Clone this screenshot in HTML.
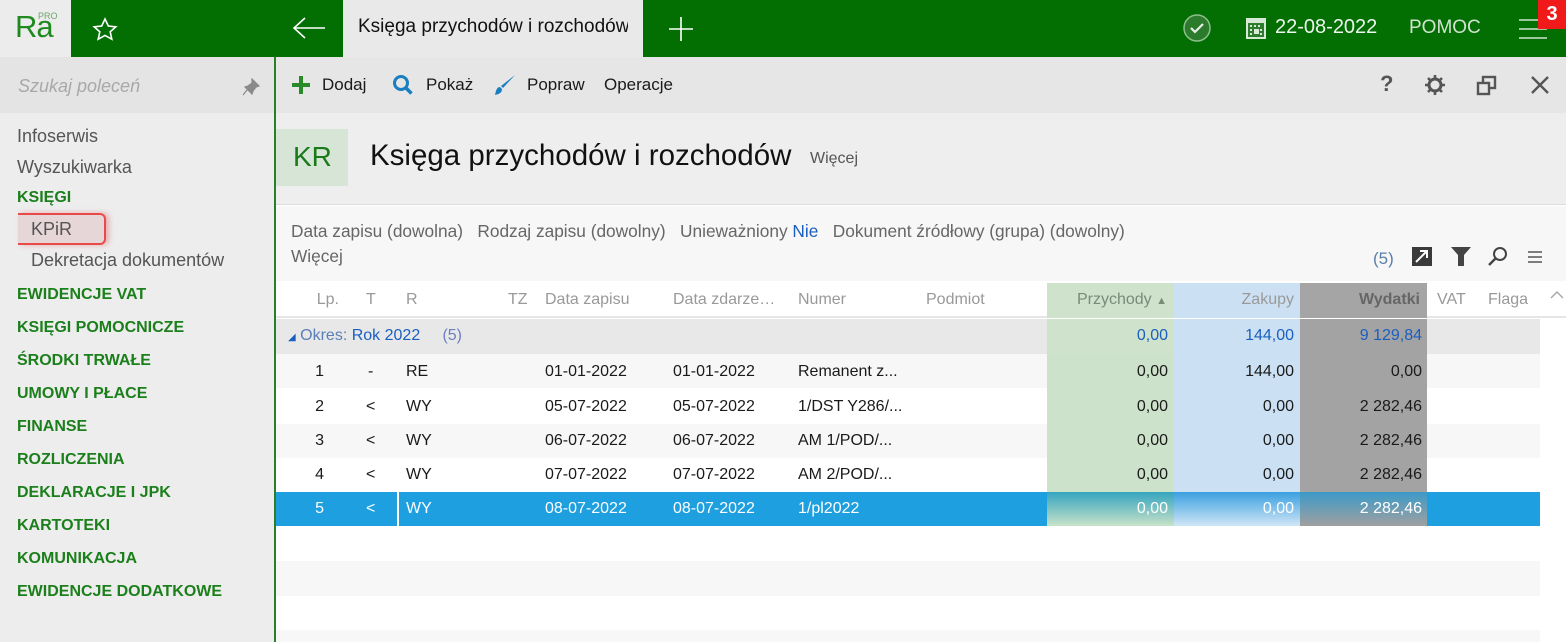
<!DOCTYPE html>
<html><head><meta charset="utf-8"><style>
*{margin:0;padding:0;box-sizing:border-box}
body{width:1566px;height:642px;overflow:hidden;font-family:"Liberation Sans",sans-serif;background:#fff;position:relative;color:#1a1a1a}
.a{position:absolute;white-space:nowrap}
.top{left:0;top:0;width:1566px;height:57px;background:#036f03}
.side{left:0;top:57px;width:276px;height:585px;background:#ededed;border-right:2px solid #2a7d2a}
.g{color:#1b7f1b;font-weight:bold;font-size:16px;left:17px}
.row{left:276px;width:1264px;height:34px;font-size:16px}
.c{position:absolute;top:0;height:100%;line-height:34px;white-space:nowrap}
.r{text-align:right}
</style></head><body>
<div class="a top"></div>
<div class="a" style="left:0;top:0;width:71px;height:57px;background:#ececec"></div>
<div class="a" style="left:15px;top:9px;font-size:31px;color:#1f8a1f;letter-spacing:-1px">Ra</div>
<div class="a" style="left:38px;top:11px;font-size:9px;color:#6aa86a">PRO</div>
<svg class="a" style="left:92px;top:17px" width="26" height="26" viewBox="0 0 26 26"><path d="M13 2l3.3 7 7.5.8-5.6 5 1.6 7.4L13 18.4 6.2 22.2l1.6-7.4-5.6-5 7.5-.8z" fill="none" stroke="#fff" stroke-width="1.6"/></svg>
<svg class="a" style="left:292px;top:16px" width="34" height="24"><path d="M2 12h31M13 2L2 12l11 10" fill="none" stroke="#fff" stroke-width="1.6"/></svg>
<div class="a" style="left:343px;top:0;width:300px;height:57px;background:#e9e9e9"></div>
<div class="a" style="left:358px;top:16px;font-size:19px;color:#111;width:270px;overflow:hidden">Księga przychodów i rozchodów</div>
<svg class="a" style="left:668px;top:16px" width="26" height="26"><path d="M13 1v24M1 13h24" stroke="#fff" stroke-width="1.6"/></svg>
<svg class="a" style="left:1182px;top:13px" width="30" height="30"><circle cx="15" cy="15" r="13" fill="#2c7a2c" stroke="#8cbf8c" stroke-width="1.5"/><path d="M9 15l4 4 8-8" fill="none" stroke="#e6f0e6" stroke-width="2.2"/></svg>
<svg class="a" style="left:1246px;top:18px" width="20" height="21"><rect x="0" y="0" width="20" height="21" fill="#d7ead7"/><rect x="2" y="5" width="16" height="14" fill="#2e7d2e"/><g fill="#d7ead7"><rect x="4" y="7" width="2" height="2"/><rect x="8" y="7" width="2" height="2"/><rect x="12" y="7" width="2" height="2"/><rect x="4" y="11" width="2" height="2"/><rect x="8" y="11" width="5" height="5"/><rect x="4" y="15" width="2" height="2"/><rect x="14" y="11" width="2" height="2"/><rect x="14" y="15" width="2" height="2"/></g></svg>
<div class="a" style="left:1275px;top:16px;font-size:20px;color:#eef5ee">22-08-2022</div>
<div class="a" style="left:1409px;top:17px;font-size:19px;color:#cfe3cf">POMOC</div>
<svg class="a" style="left:1519px;top:19px" width="28" height="20"><path d="M0 1h28M0 10h28M0 19h28" stroke="#cfe3cf" stroke-width="1.6"/></svg>
<div class="a" style="left:1538px;top:0;width:28px;height:29px;background:#f01a1a;color:#fff;font-weight:bold;font-size:20px;text-align:center;line-height:29px">3</div>

<div class="a side"></div>
<div class="a" style="left:0;top:57px;width:274px;height:56px;background:#e4e4e4"></div>
<div class="a" style="left:18px;top:76px;font-size:18px;font-style:italic;color:#a8a8a8">Szukaj poleceń</div>
<svg class="a" style="left:242px;top:78px" width="18" height="18"><path d="M10 1l7 7-3 1-3 4-1 3-7-7 3-1 4-3z M5 12l-4 5" fill="#8a8a8a" stroke="#8a8a8a" stroke-width="1.2"/></svg>
<div class="a" style="left:17px;top:126px;font-size:18px;color:#555">Infoserwis</div>
<div class="a" style="left:17px;top:157px;font-size:18px;color:#555">Wyszukiwarka</div>
<div class="a g" style="top:189px">KSIĘGI</div>
<div class="a" style="left:18px;top:213px;width:88px;height:32px;background:#e6d6d8;border:2px solid #e84a4a;border-left:none;border-radius:0 6px 6px 0;box-shadow:3px 0 6px rgba(220,80,80,.4)"></div>
<div class="a" style="left:31px;top:219px;font-size:18px;color:#555">KPiR</div>
<div class="a" style="left:31px;top:250px;font-size:18px;color:#555">Dekretacja dokumentów</div>
<div class="a g" style="top:286px">EWIDENCJE VAT</div>
<div class="a g" style="top:319px">KSIĘGI POMOCNICZE</div>
<div class="a g" style="top:352px">ŚRODKI TRWAŁE</div>
<div class="a g" style="top:385px">UMOWY I PŁACE</div>
<div class="a g" style="top:418px">FINANSE</div>
<div class="a g" style="top:451px">ROZLICZENIA</div>
<div class="a g" style="top:484px">DEKLARACJE I JPK</div>
<div class="a g" style="top:517px">KARTOTEKI</div>
<div class="a g" style="top:550px">KOMUNIKACJA</div>
<div class="a g" style="top:583px">EWIDENCJE DODATKOWE</div>

<div class="a" style="left:276px;top:57px;width:1290px;height:56px;background:#e6e6e6"></div>
<svg class="a" style="left:291px;top:75px" width="20" height="20"><path d="M10 1v18M1 10h18" stroke="#2a8a2a" stroke-width="4"/></svg>
<div class="a" style="left:322px;top:75px;font-size:17px">Dodaj</div>
<svg class="a" style="left:392px;top:74px" width="22" height="22"><circle cx="9" cy="9" r="6.5" fill="none" stroke="#1a7fc0" stroke-width="3"/><path d="M13.5 13.5l6 6" stroke="#1a7fc0" stroke-width="3.5"/></svg>
<div class="a" style="left:426px;top:75px;font-size:17px">Pokaż</div>
<svg class="a" style="left:493px;top:73px" width="24" height="24"><path d="M22 2L10 15l-2-2z" fill="#1a7fc0"/><path d="M7 14c-3 0-4 3-5 8 4-1 7-2 7-6z" fill="#1a7fc0"/></svg>
<div class="a" style="left:527px;top:75px;font-size:17px">Popraw</div>
<div class="a" style="left:604px;top:75px;font-size:17px">Operacje</div>
<div class="a" style="left:1380px;top:71px;font-size:22px;font-weight:bold;color:#555">?</div>
<svg class="a" style="left:1424px;top:74px" width="22" height="22"><circle cx="11" cy="11" r="6" fill="none" stroke="#555" stroke-width="3"/><path d="M11 1v5M11 16v5M1 11h5M16 11h5M4 4l3.5 3.5M14.5 14.5L18 18M18 4l-3.5 3.5M7.5 14.5L4 18" stroke="#555" stroke-width="2.6"/></svg>
<svg class="a" style="left:1476px;top:75px" width="22" height="22"><rect x="7" y="2" width="12" height="11" fill="none" stroke="#555" stroke-width="2.4"/><rect x="2" y="8" width="11" height="11" fill="#e6e6e6" stroke="#555" stroke-width="2.4"/></svg>
<svg class="a" style="left:1530px;top:75px" width="20" height="20"><path d="M2 2l16 16M18 2L2 18" stroke="#555" stroke-width="2.4"/></svg>

<div class="a" style="left:276px;top:113px;width:1290px;height:92px;background:#eeeeee;border-bottom:1px solid #dcdcdc"></div>
<div class="a" style="left:276px;top:129px;width:72px;height:57px;background:#d6e5d6"></div>
<div class="a" style="left:293px;top:141px;font-size:28px;color:#1a7a1a">KR</div>
<div class="a" style="left:370px;top:139px;font-size:29.5px;color:#111">Księga przychodów i rozchodów</div>
<div class="a" style="left:810px;top:150px;font-size:16px;color:#555">Więcej</div>

<div class="a" style="left:276px;top:206px;width:1290px;height:75px;background:#f7f7f7"></div>
<div class="a" style="left:291px;top:221px;font-size:17.3px;color:#666">Data zapisu (dowolna) &nbsp; Rodzaj zapisu (dowolny) &nbsp; Unieważniony <span style="color:#1a5fc0">Nie</span> &nbsp; Dokument źródłowy (grupa) (dowolny)</div>
<div class="a" style="left:291px;top:246px;font-size:17.3px;color:#666">Więcej</div>
<div class="a" style="left:1373px;top:249px;font-size:17px;color:#5a7fa8">(5)</div>
<svg class="a" style="left:1412px;top:247px" width="22" height="20"><rect width="20" height="19" fill="#3a3a3a"/><path d="M4 15L15 4M8 4h7v7" stroke="#fff" stroke-width="2" fill="none"/></svg>
<svg class="a" style="left:1451px;top:247px" width="20" height="20"><path d="M0 0h20l-7 8v11h-6V8z" fill="#444"/></svg>
<svg class="a" style="left:1487px;top:246px" width="22" height="22"><circle cx="13" cy="8" r="6" fill="none" stroke="#444" stroke-width="2"/><path d="M9 12l-7 7" stroke="#444" stroke-width="2.4"/></svg>
<svg class="a" style="left:1528px;top:251px" width="16" height="12"><path d="M0 1h14M0 6h14M0 11h14" stroke="#555" stroke-width="1.5"/></svg>

<!-- header -->
<div class="a" style="left:276px;top:281px;width:1290px;height:37px;background:#fff;border-bottom:2px solid #e6e6e6"></div>
<div class="a" style="left:1047px;top:283px;width:127px;height:35px;background:#cfe3cc"></div>
<div class="a" style="left:1174px;top:283px;width:126px;height:35px;background:#cbe1f3"></div>
<div class="a" style="left:1300px;top:283px;width:127px;height:35px;background:#a5a5a5"></div>
<div class="a" style="left:276px;top:283px;width:1264px;height:35px;font-size:16px;color:#999">
<span class="c r" style="left:0;width:63px">Lp.</span>
<span class="c" style="left:90px">T</span>
<span class="c" style="left:130px">R</span>
<span class="c" style="left:232px">TZ</span>
<span class="c" style="left:269px">Data zapisu</span>
<span class="c" style="left:397px">Data zdarze…</span>
<span class="c" style="left:522px">Numer</span>
<span class="c" style="left:650px">Podmiot</span>
<span class="c r" style="left:771px;width:120px;color:#7a8a7a">Przychody <span style="font-size:11px">▲</span></span>
<span class="c r" style="left:898px;width:120px">Zakupy</span>
<span class="c r" style="left:1024px;width:120px;color:#666;font-weight:bold">Wydatki</span>
<span class="c" style="left:1161px">VAT</span>
<span class="c" style="left:1212px">Flaga</span>
</div>
<svg class="a" style="left:1550px;top:290px" width="14" height="10"><path d="M1 8l6-6 6 6" fill="none" stroke="#aaa" stroke-width="1.5"/></svg>

<!-- group -->
<div class="a row" style="top:319px;height:35px;background:#e8e8e8"></div>
<div class="a" style="left:1047px;top:319px;width:127px;height:35px;background:#cfe3cc"></div>
<div class="a" style="left:1174px;top:319px;width:126px;height:35px;background:#cbe1f3"></div>
<div class="a" style="left:1300px;top:319px;width:127px;height:35px;background:#a3a3a3"></div>
<div class="a row" style="top:319px;height:35px">
<span class="c" style="left:12px;color:#1a5fc0"><span style="font-size:10px">◢</span> <span style="color:#5a7fb8">Okres:</span> Rok 2022 &nbsp;&nbsp;&nbsp; <span style="color:#6a7fc0">(5)</span></span>
<span class="c r" style="left:771px;width:121px;color:#1a5fc0">0,00</span>
<span class="c r" style="left:898px;width:120px;color:#1a5fc0">144,00</span>
<span class="c r" style="left:1024px;width:122px;color:#1a5fc0">9 129,84</span>
</div>

<!-- rows -->
<div class="a row" style="top:354px;background:#f7f7f7"></div>
<div class="a row" style="top:390px;background:#fff"></div>
<div class="a row" style="top:424px;background:#f7f7f7"></div>
<div class="a row" style="top:458px;background:#fff"></div>
<div class="a row" style="top:492px;background:#1e9fdf"></div>
<div class="a" style="left:1047px;top:354px;width:127px;height:138px;background:#cde2cb"></div>
<div class="a" style="left:1174px;top:354px;width:126px;height:138px;background:#cbe1f3"></div>
<div class="a" style="left:1300px;top:354px;width:127px;height:138px;background:#a3a3a3"></div>
<div class="a" style="left:1047px;top:492px;width:127px;height:34px;background:linear-gradient(#34a5bf,#c8e2c8)"></div>
<div class="a" style="left:1174px;top:492px;width:126px;height:34px;background:linear-gradient(#3aa0e0,#d0e6f6)"></div>
<div class="a" style="left:1300px;top:492px;width:127px;height:34px;background:linear-gradient(#3c9ac8,#a0a0a0)"></div>

<div class="a row" style="top:355px"><span class="c r" style="left:0;width:48px">1</span><span class="c" style="left:92px">-</span><span class="c" style="left:130px">RE</span><span class="c" style="left:269px">01-01-2022</span><span class="c" style="left:397px">01-01-2022</span><span class="c" style="left:522px">Remanent z...</span><span class="c r" style="left:771px;width:121px">0,00</span><span class="c r" style="left:898px;width:120px">144,00</span><span class="c r" style="left:1024px;width:122px">0,00</span></div>
<div class="a row" style="top:390px"><span class="c r" style="left:0;width:48px">2</span><span class="c" style="left:90px">&lt;</span><span class="c" style="left:130px">WY</span><span class="c" style="left:269px">05-07-2022</span><span class="c" style="left:397px">05-07-2022</span><span class="c" style="left:522px">1/DST Y286/...</span><span class="c r" style="left:771px;width:121px">0,00</span><span class="c r" style="left:898px;width:120px">0,00</span><span class="c r" style="left:1024px;width:122px">2 282,46</span></div>
<div class="a row" style="top:424px"><span class="c r" style="left:0;width:48px">3</span><span class="c" style="left:90px">&lt;</span><span class="c" style="left:130px">WY</span><span class="c" style="left:269px">06-07-2022</span><span class="c" style="left:397px">06-07-2022</span><span class="c" style="left:522px">AM 1/POD/...</span><span class="c r" style="left:771px;width:121px">0,00</span><span class="c r" style="left:898px;width:120px">0,00</span><span class="c r" style="left:1024px;width:122px">2 282,46</span></div>
<div class="a row" style="top:458px"><span class="c r" style="left:0;width:48px">4</span><span class="c" style="left:90px">&lt;</span><span class="c" style="left:130px">WY</span><span class="c" style="left:269px">07-07-2022</span><span class="c" style="left:397px">07-07-2022</span><span class="c" style="left:522px">AM 2/POD/...</span><span class="c r" style="left:771px;width:121px">0,00</span><span class="c r" style="left:898px;width:120px">0,00</span><span class="c r" style="left:1024px;width:122px">2 282,46</span></div>
<div class="a row" style="top:492px;color:#fff"><span class="c r" style="left:0;width:48px">5</span><span class="c" style="left:90px">&lt;</span><span class="c" style="left:121px;width:2px;background:#fff"></span><span class="c" style="left:130px">WY</span><span class="c" style="left:269px">08-07-2022</span><span class="c" style="left:397px">08-07-2022</span><span class="c" style="left:522px">1/pl2022</span><span class="c r" style="left:771px;width:121px">0,00</span><span class="c r" style="left:898px;width:120px">0,00</span><span class="c r" style="left:1024px;width:122px">2 282,46</span></div>

<div class="a row" style="top:561px;height:35px;background:#f7f7f7"></div>
<div class="a row" style="top:630px;height:12px;background:#f7f7f7"></div>
</body></html>
